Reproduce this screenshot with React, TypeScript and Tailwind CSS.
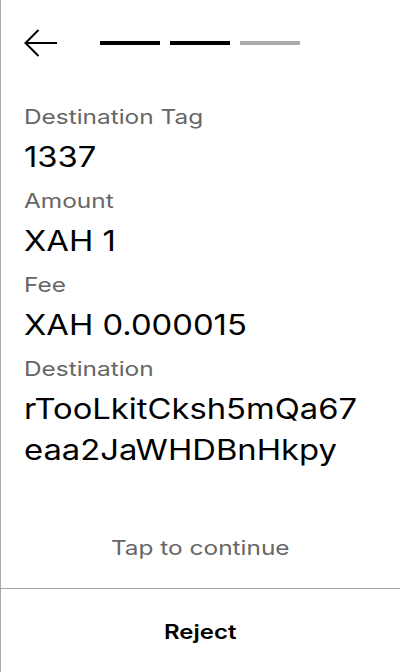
import React from 'react';

const fields = [
  { label: 'Destination Tag', value: '1337' },
  { label: 'Amount', value: 'XAH 1' },
  { label: 'Fee', value: 'XAH 0.000015' },
  { label: 'Destination', value: 'rTooLkitCksh5mQa67eaa2JaWHDBnHkpy' },
];

export default function App() {
  return (
    <div
      className="w-[400px] h-[672px] bg-white border-l border-[#a8a8a8] flex flex-col text-black"
      style={{ fontFamily: 'Inter, "Noto Sans", sans-serif' }}
    >
      {/* Header: back arrow + step progress */}
      <div className="flex items-center h-[28px] mt-[29px] pl-[23px]">
        <svg width="34" height="28" viewBox="0 0 34 28" fill="none" stroke="black" strokeWidth="2">
          <path d="M1.5 14H33" />
          <path d="M14.5 1L1.5 14L14.5 27" />
        </svg>
        <div className="flex gap-[10px] ml-[42px]">
          <div className="w-[60px] h-[4px] bg-black" />
          <div className="w-[60px] h-[4px] bg-black" />
          <div className="w-[60px] h-[4px] bg-[#aaaaaa]" />
        </div>
      </div>

      {/* Transaction details */}
      <div className="flex flex-col pl-[23px] mt-[45px]">
        {fields.map((f, idx) => (
          <div key={idx} className={idx > 0 ? 'mt-2' : ''}>
            <div className="text-[20px] leading-[30px] text-[#666666]">
              <span className="inline-block origin-left scale-x-[1.22]">{f.label}</span>
            </div>
            <div className="text-[28px] leading-[41px] mt-[5px] w-[290px] break-all origin-left scale-x-[1.17]">
              {f.value}
            </div>
          </div>
        ))}
      </div>

      <div className="flex-1" />

      <div className="text-center text-[20px] leading-[30px] text-[#666666] mb-[25px]">
        <span className="inline-block scale-x-[1.22]">Tap to continue</span>
      </div>

      <div className="border-t border-[#a8a8a8] h-[84px] flex items-center justify-center pt-[2px]">
        <span className="inline-block text-[20px] font-semibold scale-x-[1.2]">Reject</span>
      </div>
    </div>
  );
}
